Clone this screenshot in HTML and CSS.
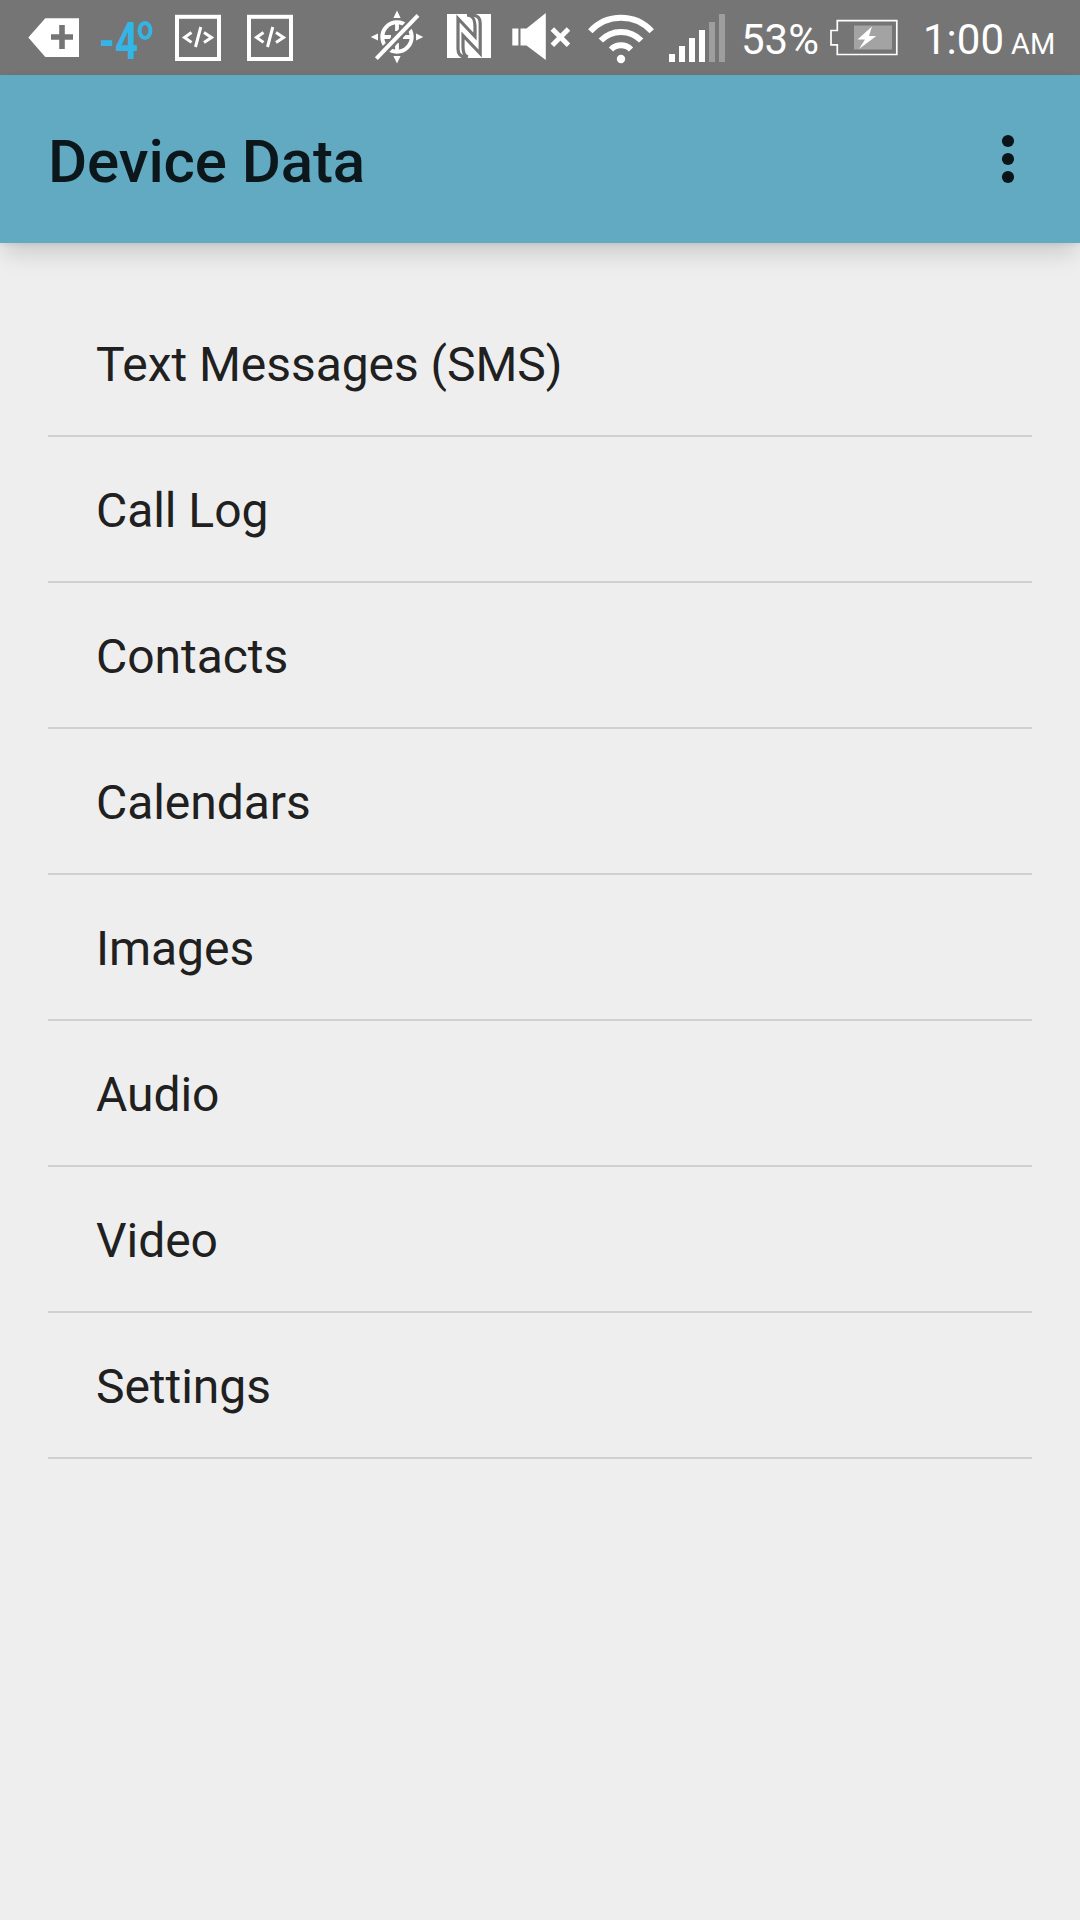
FILE: index.html
```html
<!DOCTYPE html>
<html lang="en">
<head>
<meta charset="utf-8">
<title>Device Data</title>
<link rel="stylesheet" href="styles.css">
</head>
<body>
<header class="status">
  <div class="notifications">
    <svg class="icon" width="56" height="75" viewBox="26 0 56 75"><path fill="#fff" d="M28.3 37.5 45.3 18.2H79V57H45.3Z"/><path stroke="#757575" stroke-width="5.6" d="M51 37H73M62 25V49"/></svg>
    <svg class="icon temperature" width="60" height="75" viewBox="96 0 60 75"><text x="99" y="59" font-size="51" font-weight="700" fill="#33b5e5" textLength="39" lengthAdjust="spacingAndGlyphs">-4</text><ellipse cx="145" cy="30.5" rx="5.4" ry="7.4" fill="none" stroke="#33b5e5" stroke-width="4"/></svg>
    <svg class="icon code" width="46" height="75" viewBox="175 0 46 75"><g fill="none" stroke="#fff"><rect x="177" y="16.8" width="42" height="42.2" stroke-width="4"/><path stroke-width="3" d="M191.5 32.5 184.5 37.4 191.5 42.4M204 32.5 211.5 37.4 204 42.4M200.8 27 195.5 47"/></g></svg>
    <svg class="icon code" width="46" height="75" viewBox="175 0 46 75"><g fill="none" stroke="#fff"><rect x="177" y="16.8" width="42" height="42.2" stroke-width="4"/><path stroke-width="3" d="M191.5 32.5 184.5 37.4 191.5 42.4M204 32.5 211.5 37.4 204 42.4M200.8 27 195.5 47"/></g></svg>
  </div>
  <div class="system">
    <svg class="icon" width="54" height="75" viewBox="370 0 54 75"><path fill="#fff" d="M397 10.5 400.6 18H393.4ZM397 63.5 400.6 56H393.4ZM370.7 37 378 33.4V40.6ZM423.3 37 416 33.4V40.6Z"/><g fill="none" stroke="#fff"><circle cx="397" cy="37" r="14.7" stroke-width="4"/><path stroke-width="3.8" d="M397 22V31M397 43V52M382 37H391M403 37H412"/><path stroke="#757575" stroke-width="9" d="M378 57.5 417 16.5"/><path stroke-width="4" d="M376.3 58.6 418 15.4"/></g></svg>
    <svg class="icon nfc" width="44" height="75" viewBox="447 0 44 75"><path fill="#fff" d="M447 14H491V58H447Z"/><path fill="none" stroke="#757575" stroke-width="3.2" d="M466 57C460 56.8 458 54 458 49V18.5L475 36.5V27C475 19 473 15.5 467 15H472C478 15.2 480.2 18 480.2 23V53.5L463 35.5V47C463 53 464 56 468 57"/></svg>
    <svg class="icon mute" width="58" height="75" viewBox="512 0 58 75"><path fill="#fff" d="M512.3 28.6H518.4V45.6H512.3ZM520.5 28.6H526.5L545.8 13V60L526.5 45.6H520.5Z"/><path stroke="#fff" stroke-width="5" d="M552.3 29 568.5 45.3M568.5 29 552.3 45.3"/></svg>
    <svg class="icon wifi" width="68" height="75" viewBox="587 0 68 75"><circle cx="621" cy="59" r="4.2" fill="#fff"/><path fill="none" stroke="#fff" stroke-width="6" d="M590.3 31.2A41.7 41.7 0 0 1 651.7 31.2M600.8 40.5A28 28 0 0 1 641.2 40.5M611 49.5A14 14 0 0 1 631 49.5"/></svg>
    <svg class="icon signal" width="56" height="75" viewBox="669 0 56 75"><path fill="#fff" d="M669 54h6v8h-6ZM679 46h6v16h-6ZM689 38h6v24h-6ZM699 30h6v32h-6Z"/><path fill="#9e9e9e" d="M709 22h6v40h-6ZM719 14h6v48h-6Z"/></svg>
    <span class="percent">53%</span>
    <svg class="icon battery" width="68" height="75" viewBox="830 0 68 75"><path fill="#a3a3a3" d="M854 25.5H892V49.5H854Z"/><path fill="none" stroke="#fff" stroke-width="1.7" d="M837.3 20.7H896.8V54.5H837.3V44.8H831V30.5H837.3Z"/><path fill="#fff" d="M872 26.5 857.5 39.5H865L859 49 876.3 36H869Z"/></svg>
    <span class="time">1:00</span><span class="ampm">AM</span>
  </div>
</header>
<div class="appbar">
  <h1 class="title">Device Data</h1>
  <svg class="overflow" width="14" height="50" viewBox="0 0 14 50"><g fill="#091519"><circle cx="7" cy="7" r="6.1"/><circle cx="7" cy="25" r="6.1"/><circle cx="7" cy="43" r="6.1"/></g></svg>
</div>
<ul class="list">
  <li class="row">Text Messages (SMS)</li>
  <li class="row">Call Log</li>
  <li class="row">Contacts</li>
  <li class="row">Calendars</li>
  <li class="row">Images</li>
  <li class="row">Audio</li>
  <li class="row">Video</li>
  <li class="row">Settings</li>
</ul>
</body>
</html>
```
FILE: styles.css
```css
* { box-sizing: border-box; }
body {
  margin: 0;
  min-height: 1920px;
  background: #eeeeee;
  color: #202020;
  font-family: Roboto, sans-serif;
}
.status {
  display: flex;
  justify-content: space-between;
  height: 75px;
  padding: 0 24px 0 26px;
  background: #757575;
  color: #fff;
}
.notifications, .system { display: flex; }
.icon { display: block; flex: none; }
.temperature { margin-left: 14px; }
.code { margin-left: 19px; }
.code + .code { margin-left: 26px; }
.nfc { margin-left: 23px; }
.mute { margin-left: 21px; }
.wifi { margin-left: 17px; }
.signal { margin-left: 14px; }
.percent, .time, .ampm {
  flex: none;
  line-height: 50px;
  padding-top: 15px;
  font-size: 42px;
  white-space: nowrap;
}
.percent { width: 89px; margin-left: 16px; }
.time { width: 88px; margin-left: 25px; }
.ampm { width: 45px; padding-top: 19px; font-size: 29px; }
.appbar {
  display: flex;
  align-items: center;
  justify-content: space-between;
  height: 168px;
  padding: 0 65px 0 48px;
  background: #62a9c2;
  box-shadow: 0 14px 22px -4px rgba(0, 0, 0, 0.15), 0 1px 6px rgba(0, 0, 0, 0.08);
}
.title {
  margin: 0;
  padding-top: 4px;
  font-size: 60px;
  font-weight: 500;
  letter-spacing: -0.1px;
  color: #0c171b;
}
.overflow { display: block; }
.list {
  margin: 0;
  padding: 48px 48px 0;
  list-style: none;
}
.row {
  height: 146px;
  padding: 3px 48px 0;
  border-bottom: 2px solid #d0d0d0;
  font-size: 48px;
  letter-spacing: -0.05px;
  line-height: 141px;
}
```
